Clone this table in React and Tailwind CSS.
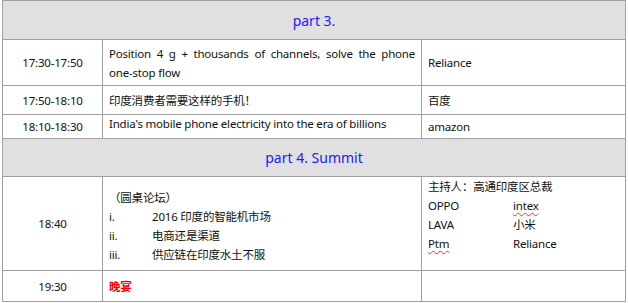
import React from 'react';

const cell = 'border border-[#a0a0a0] px-[6px] align-middle';

export default function App() {
  return (
    <div className="w-[628px] h-[303px] bg-white pl-[2px] pt-0" style={{ fontFamily: '"Noto Sans", "Noto Sans CJK SC", sans-serif' }}>
      <table className="border-collapse text-[11.5px] leading-[19px] tracking-[-0.2px] text-[#111]">
        <colgroup>
          <col className="w-[100px]" />
          <col className="w-[319px]" />
          <col className="w-[204px]" />
        </colgroup>
        <tbody>
          {/* part 3 */}
          <tr className="h-[39px] bg-[#e0e0e0]">
            <td colSpan={3} className={`${cell} text-center text-[14px] tracking-normal text-[#1a1aff] pt-[1px]`}>part 3.</td>
          </tr>
          <tr className="h-[46px]">
            <td className={`${cell} text-center`}>17:30-17:50</td>
            <td className={`${cell} text-justify`}>
              Position 4 g + thousands of channels, solve the phone <span className="whitespace-nowrap">one-stop</span> flow
            </td>
            <td className={cell}>Reliance</td>
          </tr>
          <tr className="h-[29px]">
            <td className={`${cell} text-center`}>17:50-18:10</td>
            <td className={cell}>印度消费者需要这样的手机！</td>
            <td className={cell}>百度</td>
          </tr>
          <tr className="h-[24px]">
            <td className={`${cell} text-center`}>18:10-18:30</td>
            <td className={`${cell} align-top leading-[17px]`}>India's mobile phone electricity into the era of billions</td>
            <td className={cell}>amazon</td>
          </tr>

          {/* part 4 */}
          <tr className="h-[38px] bg-[#e0e0e0]">
            <td colSpan={3} className={`${cell} text-center text-[14px] tracking-normal text-[#1a1aff]`}>part 4. Summit</td>
          </tr>
          <tr className="h-[94px]">
            <td className={`${cell} text-center`}>18:40</td>
            <td className={`${cell} pt-[4px]`}>
              <div>（圆桌论坛）</div>
              <div className="flex"><span className="w-[43px]">i.</span><span>2016 印度的智能机市场</span></div>
              <div className="flex"><span className="w-[43px]">ii.</span><span>电商还是渠道</span></div>
              <div className="flex"><span className="w-[43px]">iii.</span><span>供应链在印度水土不服</span></div>
            </td>
            <td className={`${cell} align-top`}>
              <div>主持人：高通印度区总裁</div>
              <div className="grid grid-cols-[85px_1fr]">
                <span>OPPO</span><span className="underline decoration-wavy decoration-red-500 decoration-1 underline-offset-2">intex</span>
                <span>LAVA</span><span>小米</span>
                <span><span className="underline decoration-wavy decoration-red-500 decoration-1 underline-offset-2">Ptm</span></span><span>Reliance</span>
              </div>
            </td>
          </tr>
          <tr className="h-[31px]">
            <td className={`${cell} text-center`}>19:30</td>
            <td className={`${cell} text-[#ff0000] font-semibold`}>晚宴</td>
            <td className={cell}></td>
          </tr>
        </tbody>
      </table>
    </div>
  );
}
